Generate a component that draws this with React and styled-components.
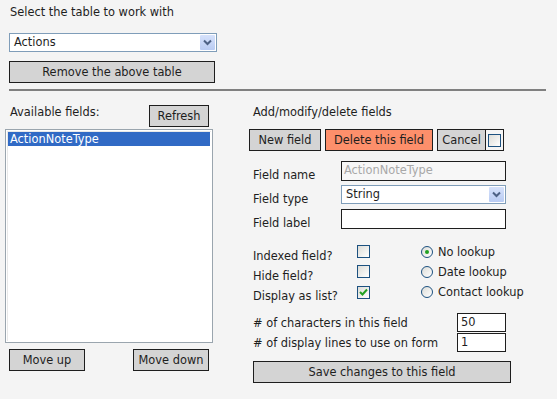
import React from 'react';
import styled, { createGlobalStyle } from 'styled-components';

const Global = createGlobalStyle`
  html, body { margin: 0; padding: 0; background: #f4f4f4; }
  body {
    font-family: "DejaVu Sans", Verdana, sans-serif;
    font-size: 11.4px;
    color: #1e1e1e;
  }
  * { box-sizing: border-box; }
`;

const Page = styled.div`
  width: 557px;
  height: 399px;
  padding-top: 5px;
  background: #f4f4f4;
`;

const Top = styled.div`
  display: flex;
  flex-direction: column;
  align-items: flex-start;
  padding-left: 9px;
`;

const Text = styled.div`
  line-height: 14px;
  height: 14px;
  white-space: nowrap;
  padding-left: ${p => p.$indent || 0}px;
  padding-top: ${p => p.$top || 0}px;
  box-sizing: content-box;
`;

const SelectBox = styled.div`
  position: relative;
  width: ${p => p.$w}px;
  height: 19px;
  margin-top: ${p => p.$mt || 0}px;
  border: 1px solid #7f9db9;
  background: #fff;
  line-height: 17px;
  padding-left: 4px;
  white-space: nowrap;
`;

const Arrow = styled.span`
  position: absolute;
  right: 1px;
  top: 1px;
  width: 15px;
  height: 15px;
  background: linear-gradient(#d6e2fb, #b9cbf3);
  border-radius: 1px;
  display: flex;
  align-items: center;
  justify-content: center;
`;

const Button = styled.button`
  font: inherit;
  color: #1e1e1e;
  width: ${p => p.$w}px;
  height: 22px;
  margin-top: ${p => p.$mt || 0}px;
  border: 1px solid #1e1e1e;
  background: ${p => (p.$danger ? '#fd8f6b' : '#d4d4d4')};
  padding: 0;
  line-height: 18px;
  text-align: center;
  white-space: nowrap;
  cursor: default;
`;

const Rule = styled.hr`
  margin: 6px 0 0 0;
  width: 537px;
  height: 2px;
  border: none;
  background: #808080;
`;

const Columns = styled.div`
  display: flex;
  gap: 36px;
  padding-left: 5px;
  margin-top: 14px;
`;

const LeftCol = styled.div`
  width: 208px;
  display: flex;
  flex-direction: column;
`;

const HeaderRow = styled.div`
  display: flex;
  justify-content: space-between;
  align-items: flex-start;
  padding-left: 5px;
  width: 204px;
`;

const ListBox = styled.div`
  margin-top: 2px;
  width: 208px;
  height: 214px;
  border: 1px solid #9aa5ae;
  box-shadow: inset 0 0 0 1px #ffffff, inset 1px 1px 0 1px #e8e8e8;
  background: #fff;
  padding: 2px;
`;

const ListItem = styled.div`
  height: 14px;
  line-height: 14px;
  padding-left: 2px;
  background: ${p => (p.$selected ? '#316ac5' : 'transparent')};
  color: ${p => (p.$selected ? '#fff' : '#1e1e1e')};
  width: 202px;
`;

const MoveRow = styled.div`
  display: flex;
  justify-content: space-between;
  margin-top: 6px;
  padding-left: 4px;
  width: 204px;
`;

const RightCol = styled.div`
  display: flex;
  flex-direction: column;
  width: 270px;
`;

const ButtonRow = styled.div`
  display: flex;
  gap: 4px;
  margin-top: 10px;
`;

const CancelGroup = styled.div`
  display: flex;
  height: 22px;
  border: 1px solid #1e1e1e;
`;

const CancelBtn = styled.button`
  font: inherit;
  color: #1e1e1e;
  width: 48px;
  height: 20px;
  border: none;
  border-right: 1px solid #1e1e1e;
  background: #d4d4d4;
  padding: 0;
  cursor: default;
`;

const CheckCell = styled.div`
  width: 17px;
  display: flex;
  align-items: center;
  justify-content: center;
  background: #f4f4f4;
`;

const Check = styled.span`
  display: inline-flex;
  align-items: center;
  justify-content: center;
  width: 13px;
  height: 13px;
  border: 1px solid #1c5180;
  background: linear-gradient(135deg, #dcdcd7, #ffffff);
`;

const FieldGrid = styled.div`
  margin-top: 10px;
  display: grid;
  grid-template-columns: 92px 165px;
  grid-auto-rows: 24px;
`;

const FieldLabel = styled.div`
  padding-left: 4px;
  padding-top: 7px;
  line-height: 14px;
  white-space: nowrap;
`;

const TextInput = styled.div`
  width: 165px;
  height: ${p => p.$h || 20}px;
  border: 1px solid #1e1e1e;
  background: ${p => (p.$disabled ? '#f7f7f7' : '#fff')};
  color: ${p => (p.$disabled ? '#a8a8a8' : '#1e1e1e')};
  line-height: 16px;
  padding-left: 2px;
  white-space: nowrap;
`;

const OptionsRow = styled.div`
  display: flex;
  margin-top: 12px;
`;

const CheckGrid = styled.div`
  display: grid;
  grid-template-columns: 108px 64px;
  grid-auto-rows: 20px;
`;

const CheckLabel = styled.div`
  padding-left: 4px;
  padding-top: 4px;
  line-height: 14px;
  white-space: nowrap;
`;

const RadioList = styled.div`
  display: flex;
  flex-direction: column;
`;

const RadioRow = styled.div`
  display: flex;
  align-items: flex-start;
  gap: 5px;
  height: 20px;
  line-height: 14px;
  white-space: nowrap;
`;

const Radio = styled.span`
  margin-top: 1px;
  width: 12px;
  height: 12px;
  border-radius: 50%;
  border: 1px solid #1c5180;
  background: linear-gradient(135deg, #dcdcd7, #ffffff);
  display: inline-flex;
  align-items: center;
  justify-content: center;
  &::after {
    content: '';
    display: ${p => (p.$on ? 'block' : 'none')};
    width: 4px;
    height: 4px;
    border-radius: 50%;
    background: #21a121;
  }
`;

const NumGrid = styled.div`
  margin-top: 8px;
  display: grid;
  grid-template-columns: 208px 49px;
  grid-auto-rows: 20px;
`;

const NumLabel = styled.div`
  padding-left: 4px;
  padding-top: 3px;
  line-height: 14px;
  white-space: nowrap;
`;

const NumInput = styled.div`
  width: 49px;
  height: 19px;
  border: 1px solid #1e1e1e;
  background: #fff;
  line-height: 17px;
  padding-left: 3px;
`;

const SaveWrap = styled.div`
  padding-left: 4px;
  margin-top: 8px;
`;

const Chevron = () => (
  <svg width="9" height="7" viewBox="0 0 9 7">
    <path d="M1 1.5 L4.5 5 L8 1.5" fill="none" stroke="#4d6185" strokeWidth="2" />
  </svg>
);

const Tick = () => (
  <svg width="9" height="8" viewBox="0 0 9 8">
    <path d="M1 4 L3.5 6.5 L8 1.5" fill="none" stroke="#21a121" strokeWidth="2" />
  </svg>
);

export default function App() {
  return (
    <Page>
      <Global />
      <Top>
        <Text $indent={1}>Select the table to work with</Text>
        <SelectBox $w={208} $mt={14}>
          Actions
          <Arrow><Chevron /></Arrow>
        </SelectBox>
        <Button $w={206} $mt={9}>Remove the above table</Button>
        <Rule />
      </Top>
      <Columns>
        <LeftCol>
          <HeaderRow>
            <Text $top={0}>Available fields:</Text>
            <Button $w={60}>Refresh</Button>
          </HeaderRow>
          <ListBox>
            <ListItem $selected>ActionNoteType</ListItem>
          </ListBox>
          <MoveRow>
            <Button $w={76}>Move up</Button>
            <Button $w={76}>Move down</Button>
          </MoveRow>
        </LeftCol>
        <RightCol>
          <Text $indent={4}>Add/modify/delete fields</Text>
          <ButtonRow>
            <Button $w={72}>New field</Button>
            <Button $w={108} $danger>Delete this field</Button>
            <CancelGroup>
              <CancelBtn>Cancel</CancelBtn>
              <CheckCell><Check /></CheckCell>
            </CancelGroup>
          </ButtonRow>
          <FieldGrid>
            <FieldLabel>Field name</FieldLabel>
            <div><TextInput $disabled>ActionNoteType</TextInput></div>
            <FieldLabel>Field type</FieldLabel>
            <div>
              <SelectBox $w={165}>
                String
                <Arrow><Chevron /></Arrow>
              </SelectBox>
            </div>
            <FieldLabel>Field label</FieldLabel>
            <div><TextInput /></div>
          </FieldGrid>
          <OptionsRow>
            <CheckGrid>
              <CheckLabel>Indexed field?</CheckLabel>
              <div><Check /></div>
              <CheckLabel>Hide field?</CheckLabel>
              <div><Check /></div>
              <CheckLabel>Display as list?</CheckLabel>
              <div><Check><Tick /></Check></div>
            </CheckGrid>
            <RadioList>
              <RadioRow><Radio $on />No lookup</RadioRow>
              <RadioRow><Radio />Date lookup</RadioRow>
              <RadioRow><Radio />Contact lookup</RadioRow>
            </RadioList>
          </OptionsRow>
          <NumGrid>
            <NumLabel># of characters in this field</NumLabel>
            <div><NumInput>50</NumInput></div>
            <NumLabel># of display lines to use on form</NumLabel>
            <div><NumInput>1</NumInput></div>
          </NumGrid>
          <SaveWrap>
            <Button $w={258}>Save changes to this field</Button>
          </SaveWrap>
        </RightCol>
      </Columns>
    </Page>
  );
}
